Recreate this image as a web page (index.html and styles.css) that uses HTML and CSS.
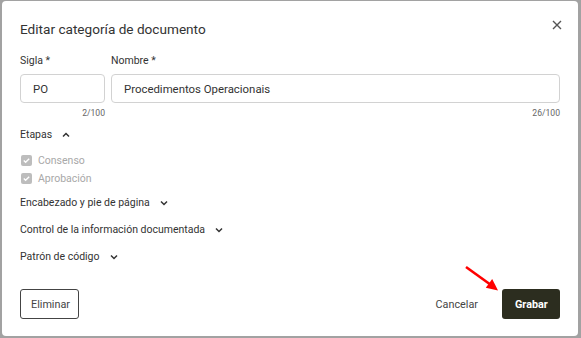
FILE: index.html
```html
<!DOCTYPE html>
<html lang="es">
<head>
<meta charset="utf-8">
<title>Editar categoría de documento</title>
<link rel="stylesheet" href="styles.css">
</head>
<body>
<div class="dialog">
  <div class="header">
    <h1 class="title">Editar categoría de documento</h1>
    <button class="close" aria-label="Cerrar">
      <svg width="10" height="10" viewBox="0 0 10 10"><path d="M1 1L9 9M9 1L1 9" stroke="#555" stroke-width="1.4" fill="none"/></svg>
    </button>
  </div>

  <div class="fields">
    <div class="field field-sigla">
      <label class="label">Sigla *</label>
      <div class="input">PO</div>
      <div class="counter">2/100</div>
    </div>
    <div class="field field-nombre">
      <label class="label">Nombre *</label>
      <div class="input">Procedimentos Operacionais</div>
      <div class="counter">26/100</div>
    </div>
  </div>

  <div class="section section-etapas">
    <span>Etapas</span>
    <svg class="chev" width="8" height="8" viewBox="0 0 8 8"><path d="M1 5.5L4 2.5L7 5.5" stroke="#333" stroke-width="1.5" fill="none"/></svg>
  </div>
  <div class="checks">
    <div class="check">
      <span class="box"><svg width="11" height="11" viewBox="0 0 11 11"><path d="M2.8 5.6L4.6 7.3L8.2 3.8" stroke="#fff" stroke-width="1.4" fill="none"/></svg></span>
      <span>Consenso</span>
    </div>
    <div class="check">
      <span class="box"><svg width="11" height="11" viewBox="0 0 11 11"><path d="M2.8 5.6L4.6 7.3L8.2 3.8" stroke="#fff" stroke-width="1.4" fill="none"/></svg></span>
      <span>Aprobación</span>
    </div>
  </div>
  <div class="section section-first">
    <span>Encabezado y pie de página</span>
    <svg class="chev" width="8" height="8" viewBox="0 0 8 8"><path d="M1 2.5L4 5.5L7 2.5" stroke="#333" stroke-width="1.5" fill="none"/></svg>
  </div>
  <div class="section">
    <span>Control de la información documentada</span>
    <svg class="chev" width="8" height="8" viewBox="0 0 8 8"><path d="M1 2.5L4 5.5L7 2.5" stroke="#333" stroke-width="1.5" fill="none"/></svg>
  </div>
  <div class="section">
    <span>Patrón de código</span>
    <svg class="chev" width="8" height="8" viewBox="0 0 8 8"><path d="M1 2.5L4 5.5L7 2.5" stroke="#333" stroke-width="1.5" fill="none"/></svg>
  </div>

  <div class="footer">
    <button class="btn btn-outline">Eliminar</button>
    <div class="actions">
      <button class="btn btn-text">Cancelar</button>
      <button class="btn btn-primary">Grabar</button>
    </div>
  </div>
</div>
<svg class="arrow" width="581" height="338" viewBox="0 0 581 338">
  <line x1="466" y1="267" x2="491" y2="285" stroke="#f00" stroke-width="2.6"/>
  <polygon points="498,290.5 485.8,287.8 492.2,279" fill="#f00"/>
</svg>
</body>
</html>
```

FILE: styles.css
```css
* { box-sizing: border-box; }
html, body { margin: 0; }
body {
  width: 581px;
  height: 338px;
  background: #a2a2a2;
  padding: 1px 3px 2px 2px;
  font-family: Roboto, "Noto Sans", sans-serif;
  color: #333;
  overflow: hidden;
  position: relative;
}
.dialog {
  width: 576px;
  height: 335px;
  background: #fff;
  border-radius: 4px;
  padding: 19px 18px 17px 18px;
  display: flex;
  flex-direction: column;
}
.header {
  display: flex;
  justify-content: space-between;
  align-items: flex-start;
}
.title {
  margin: 0;
  font-size: 13.6px;
  line-height: 18px;
  font-weight: 400;
  color: #333;
}
.close {
  border: 0;
  background: none;
  padding: 0;
  margin: 0 -2px 0 0;
  width: 10px;
  height: 10px;
  display: block;
}
.close svg { display: block; }

.fields {
  display: flex;
  gap: 6px;
  margin-top: 16px;
}
.field { display: flex; flex-direction: column; }
.field-sigla { width: 85px; }
.field-nombre { flex: 1; }
.label {
  font-size: 10.5px;
  line-height: 14px;
  color: #333;
  margin-bottom: 6px;
}
.input {
  height: 29px;
  border: 1px solid #d2d2d2;
  border-radius: 4px;
  padding: 0 12px;
  display: flex;
  align-items: center;
  font-size: 11.4px;
  color: #333;
}
.counter {
  text-align: right;
  font-size: 8.6px;
  line-height: 12px;
  color: #666;
  margin-top: 4px;
}

.section {
  display: flex;
  align-items: center;
  font-size: 10.5px;
  line-height: 14px;
  color: #333;
  margin-top: 13px;
}
.section-etapas { margin-top: 9px; }
.section-first { margin-top: 9px; }
.chev { margin-left: 10px; display: block; }

.checks {
  margin-top: 9px;
  display: flex;
  flex-direction: column;
}
.check {
  height: 18px;
  display: flex;
  align-items: center;
  gap: 6px;
  padding-left: 1px;
  font-size: 10.5px;
  color: #a8a8a8;
}
.box {
  width: 11px;
  height: 11px;
  background: #bdbdbd;
  border-radius: 2px;
  display: block;
}
.box svg { display: block; }

.footer {
  margin-top: auto;
  display: flex;
  justify-content: space-between;
  align-items: center;
}
.actions { display: flex; align-items: center; }
.btn {
  font-family: Roboto, "Noto Sans", sans-serif;
  font-size: 10.8px;
  height: 30px;
  border-radius: 3px;
  cursor: pointer;
}
.btn-outline {
  background: #fff;
  border: 1px solid #444;
  color: #444;
  padding: 0 10px;
  width: 59px;
}
.btn-text {
  background: none;
  border: 0;
  color: #444;
  padding: 0 12px;
  margin-right: 12px;
}
.btn-primary {
  background: #2c2d1f;
  border: 0;
  color: #fff;
  font-weight: 700;
  padding: 0 13px;
  width: 58px;
}
.arrow {
  position: absolute;
  left: 0;
  top: 0;
  pointer-events: none;
}
```
